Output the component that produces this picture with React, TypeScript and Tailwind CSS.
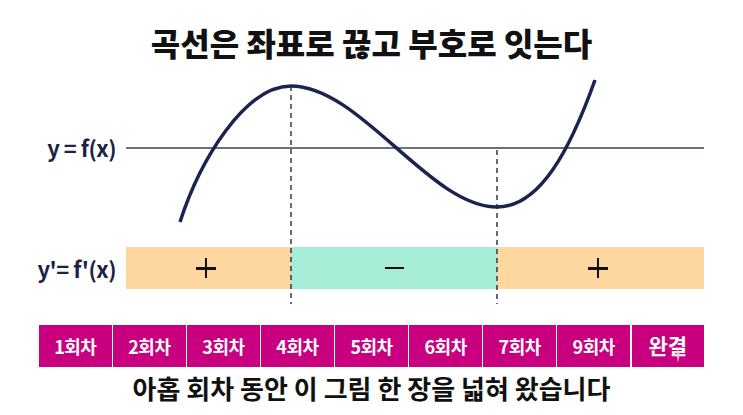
import React from "react";

const FONT = '"Noto Sans CJK KR", "Noto Sans", sans-serif';

const episodes = ["1회차", "2회차", "3회차", "4회차", "5회차", "6회차", "7회차", "9회차"];

function Sparkle() {
  return (
    <svg
      className="absolute left-[38px] top-[22px]"
      width="16"
      height="16"
      viewBox="0 0 16 16"
    >
      <path
        d="M8 0 L9.2 6.8 L16 8 L9.2 9.2 L8 16 L6.8 9.2 L0 8 L6.8 6.8 Z"
        fill="#f6c8e6"
        opacity="0.9"
      />
    </svg>
  );
}

function Plus() {
  return (
    <div className="relative w-[20px] h-[20px]">
      <div className="absolute left-0 top-[9px] w-[20px] h-[2.5px] bg-[#111]" />
      <div className="absolute left-[9px] top-0 w-[2.5px] h-[20px] bg-[#111]" />
    </div>
  );
}

export default function App() {
  return (
    <div
      className="w-[743px] h-[415px] bg-white flex flex-col overflow-hidden"
      style={{ fontFamily: FONT }}
    >
      {/* Title */}
      <div className="h-[70px] pt-[21px] flex justify-center">
        <h1 className="text-[32px] leading-[42px] font-extrabold text-[#111111]">
          곡선은 좌표로 끊고 부호로 잇는다
        </h1>
      </div>

      {/* Chart */}
      <div className="relative h-[255px] w-full flex flex-col">
        <div className="h-[177px] flex">
          <div className="w-[126px] pr-[10px] pt-[63px] flex justify-end">
            <span className="text-[22px] leading-[28px] font-bold text-[#1c2244] tracking-[-0.5px]">
              y = f(x)
            </span>
          </div>
        </div>
        <div className="h-[42px] flex">
          <div className="w-[126px] pr-[10px] flex items-center justify-end">
            <span className="text-[22px] leading-[28px] font-bold text-[#1c2244] tracking-[-0.5px]">
              y'= f'(x)
            </span>
          </div>
          <div className="w-[165px] bg-[#fdd6a0] flex items-center justify-center pr-[6px]">
            <Plus />
          </div>
          <div className="w-[206px] bg-[#a6ecd6] flex items-center justify-center">
            <div className="w-[19px] h-[2.5px] bg-[#111]" />
          </div>
          <div className="w-[207px] bg-[#fdd6a0] flex items-center justify-center pr-[6px]">
            <Plus />
          </div>
        </div>

        <svg
          className="absolute inset-0 pointer-events-none"
          width="743"
          height="255"
          viewBox="0 0 743 255"
        >
          <line x1="126" y1="78" x2="704" y2="78" stroke="#3a4052" strokeWidth="1.4" />
          <line
            x1="291"
            y1="16"
            x2="291"
            y2="234"
            stroke="#262c3e"
            strokeWidth="1.4"
            strokeDasharray="5 4"
          />
          <line
            x1="497"
            y1="80"
            x2="497"
            y2="234"
            stroke="#262c3e"
            strokeWidth="1.4"
            strokeDasharray="5 4"
          />
          <path
            d="M180,152 C200,90 245,16 291,16 C360,16 430,137 497,137 C540,137 570,80 595,10"
            fill="none"
            stroke="#1b2350"
            strokeWidth="3.5"
            strokeLinecap="butt"
          />
        </svg>
      </div>

      {/* Episode boxes */}
      <div className="h-[42px] pl-[39px] pr-[39px] flex gap-[1.5px]">
        {episodes.map((e) => (
          <div
            key={e}
            className="flex-1 bg-[#c8007f] flex items-center justify-center text-white text-[18px] font-bold tracking-[-0.5px]"
          >
            {e}
          </div>
        ))}
        <div className="relative flex-1 bg-[#c8007f] flex items-center justify-center text-white text-[21px] font-bold">
          완결
          <Sparkle />
        </div>
      </div>

      {/* Bottom text */}
      <div className="mt-[4px] flex justify-center">
        <p className="text-[26px] leading-[34px] font-bold text-[#111111]">
          아홉 회차 동안 이 그림 한 장을 넓혀 왔습니다
        </p>
      </div>
    </div>
  );
}
